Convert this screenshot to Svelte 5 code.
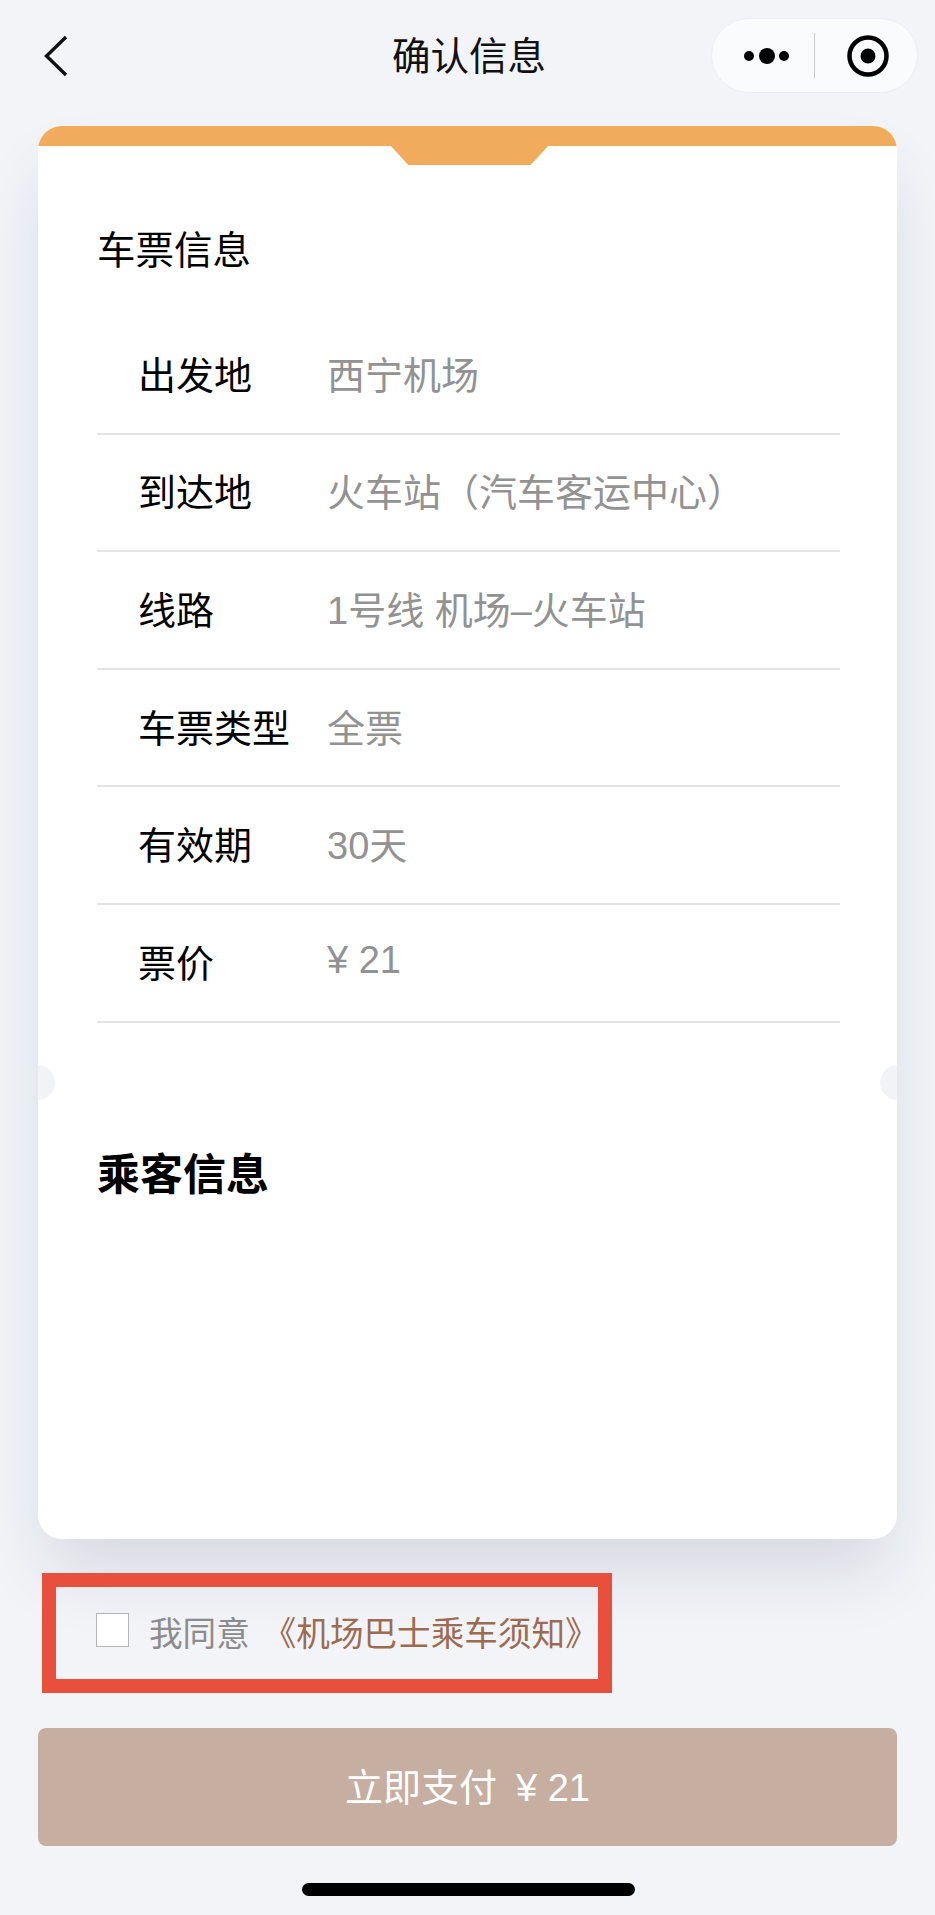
<script>
  const rows = [
    ['出发地', '西宁机场'],
    ['到达地', '火车站（汽车客运中心）'],
    ['线路', '1号线 机场–火车站'],
    ['车票类型', '全票'],
    ['有效期', '30天'],
    ['票价', '¥ 21']
  ];
</script>

<div class="page">
  <header class="nav">
    <svg class="back" width="26" height="42" viewBox="0 0 26 42" fill="none">
      <path d="M23 2 L3.500 21 L23 40" stroke="#111" stroke-width="3.400" />
    </svg>
    <h1>确认信息</h1>
    <div class="capsule">
      <svg width="48" height="20" viewBox="0 0 48 20">
        <circle cx="6" cy="10" r="5" fill="#000" />
        <circle cx="24" cy="10" r="8" fill="#000" />
        <circle cx="41" cy="10" r="5" fill="#000" />
      </svg>
      <span class="divider"></span>
      <svg width="44" height="44" viewBox="0 0 44 44">
        <circle cx="22" cy="22" r="18.500" fill="none" stroke="#000" stroke-width="4.500" />
        <circle cx="22" cy="22" r="7.500" fill="#000" />
      </svg>
    </div>
  </header>

  <main class="card">
    <div class="clip">
      <div class="band"></div>
      <div class="tab"></div>
      <span class="hole left"></span>
      <span class="hole right"></span>

      <h2 class="ticket-title">车票信息</h2>
      <ul class="rows">
        {#each rows as [label, value]}
          <li>
            <span class="label">{label}</span>
            <span class="value">{value}</span>
          </li>
        {/each}
      </ul>
      <h2 class="passenger-title">乘客信息</h2>
    </div>
  </main>

  <div class="agree">
    <span class="check"></span>
    <span class="agree-text">我同意</span>
    <span class="notice">《机场巴士乘车须知》</span>
  </div>

  <button class="pay"><span>立即支付</span><span class="price">¥ 21</span></button>

  <div class="home"></div>
</div>

<style>
  :global(body) {
    margin: 0;
    background: #f2f4f8;
  }
  .page {
    width: 935px;
    height: 1915px;
    overflow: hidden;
    background: #f2f4f8;
    font-family: "Liberation Sans", "Noto Sans CJK SC", sans-serif;
    display: flex;
    flex-direction: column;
    box-sizing: border-box;
  }
  .nav {
    height: 126px;
    flex: none;
    display: flex;
    align-items: flex-start;
    position: relative;
  }
  .back {
    position: absolute;
    left: 43px;
    top: 35px;
  }
  h1 {
    margin: 33px 0 0;
    width: 100%;
    padding-left: 3px;
    text-align: center;
    font-size: 38.500px;
    line-height: 47px;
    font-weight: 400;
    color: #111;
  }
  .capsule {
    position: absolute;
    left: 711px;
    top: 18px;
    width: 207px;
    height: 75px;
    box-sizing: border-box;
    border-radius: 38px;
    background: #fafbfd;
    border: 1px solid #eceef2;
    display: flex;
    align-items: center;
    padding-left: 31px;
  }
  .divider {
    width: 1px;
    height: 45px;
    background: #c9cacc;
    margin: 0 31px 0 23px;
  }
  .card {
    flex: none;
    margin-left: 38px;
    width: 859px;
    height: 1413px;
    background: #fff;
    border-radius: 24px;
    box-shadow: 0 40px 70px -10px rgba(20, 30, 60, 0.13);
  }
  .clip {
    position: relative;
    height: 100%;
    box-sizing: border-box;
    border-radius: 24px;
    overflow: hidden;
    padding: 0 57px 0 59px;
  }
  .band {
    position: absolute;
    left: 0;
    right: 0;
    top: 0;
    height: 19.500px;
    background: #f0ac5c;
  }
  .tab {
    position: absolute;
    left: 352px;
    top: 19px;
    width: 159px;
    height: 20px;
    background: #f0ac5c;
    clip-path: polygon(0 0, 100% 0, 88.500% 100%, 11.500% 100%);
  }
  .hole {
    position: absolute;
    top: 939px;
    width: 35px;
    height: 35px;
    border-radius: 50%;
    background: #f1f3f7;
  }
  .hole.left {
    left: -18px;
  }
  .hole.right {
    right: -18px;
  }
  h2 {
    margin: 0;
    color: #000;
  }
  .ticket-title {
    padding-top: 100px;
    font-size: 38.500px;
    line-height: 50px;
    font-weight: 400;
  }
  .rows {
    list-style: none;
    margin: 0;
    padding: 0;
    margin-top: 41px;
  }
  .rows li {
    height: 117.600px;
    box-sizing: border-box;
    border-bottom: 2px solid #e4e4e4;
    display: flex;
    align-items: center;
    padding-left: 41px;
    padding-bottom: 5px;
    font-size: 38px;
  }
  .label {
    width: 189px;
    color: #000;
  }
  .value {
    color: #929292;
  }
  .passenger-title {
    margin-top: 121px;
    font-size: 43px;
    line-height: 62px;
    font-weight: 700;
  }
  .agree {
    flex: none;
    margin: 34px 0 0 42px;
    width: 570px;
    height: 120px;
    box-sizing: border-box;
    border: 14.500px solid #e94f3d;
    display: flex;
    align-items: center;
    padding: 0 0 3px 40px;
    font-size: 33.600px;
    white-space: nowrap;
  }
  .agree > span {
    flex: none;
  }
  .check {
    width: 33px;
    height: 34px;
    box-sizing: border-box;
    border: 1px solid #b5b5b5;
    background: #fff;
    margin: 0 20px 3px 0;
  }
  .agree-text {
    color: #8c8c8c;
    margin-right: 13px;
  }
  .notice {
    color: #9c6b52;
  }
  .pay {
    flex: none;
    margin: 35px 0 0 38px;
    width: 859px;
    height: 118px;
    border: none;
    border-radius: 8px;
    padding: 0 0 6px;
    background: #c6aea1;
    color: #fff;
    font-family: inherit;
    font-size: 38px;
  }
  .price {
    margin-left: 19px;
  }
  .home {
    flex: none;
    margin: 37px 0 0 302px;
    width: 333px;
    height: 13px;
    border-radius: 7px;
    background: #000;
  }
</style>
